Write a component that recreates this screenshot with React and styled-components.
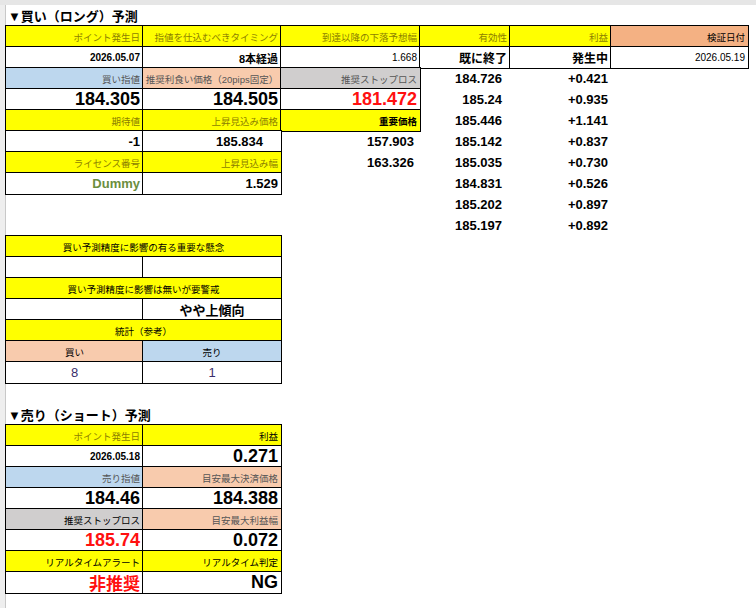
import React from 'react';
import styled, { createGlobalStyle } from 'styled-components';

const Global = createGlobalStyle`
  body { margin: 0; background: #fff; font-family: "Liberation Sans", "Noto Sans CJK JP", sans-serif; }
`;

const Page = styled.div`
  width: 756px;
  height: 608px;
  overflow: hidden;
  border-top: 5px solid #e6e6e6;
  box-sizing: border-box;
  display: flex;
`;

const Gutter = styled.div`
  width: 5px;
  background: #eeeeee;
  border-right: 1px solid #c8c8c8;
`;

const Sheet = styled.div`
  flex: 1;
  display: flex;
  flex-direction: column;
`;

const Title = styled.div`
  height: 21px;
  display: flex;
  align-items: center;
  font-weight: bold;
  font-size: 13px;
  padding-left: 2px;
  margin-top: ${(p) => p.$top || 0}px;
`;

const Grid = styled.div`
  display: grid;
  grid-template-columns: ${(p) => p.$cols};
  grid-auto-rows: 21px;
`;

const bgs = { y: '#ffff00', b: '#bdd7ee', p: '#f8cbad', g: '#d0cece', o: '#f4b183', w: '#fff' };

const Cell = styled.div`
  display: flex;
  align-items: center;
  justify-content: ${(p) => (p.$align === 'c' ? 'center' : 'flex-end')};
  padding: 0 ${(p) => p.$pad ?? 3}px;
  background: ${(p) => bgs[p.$bg] || 'transparent'};
  outline: ${(p) => (p.$line ? '1px solid #000' : 'none')};
  outline-offset: -0.5px;
  grid-column: span ${(p) => p.$span || 1};
  font-size: ${(p) => p.$size || 9.5}px;
  font-weight: ${(p) => (p.$bold ? 'bold' : 'normal')};
  color: ${(p) => p.$color || '#000'};
  white-space: nowrap;
  overflow: hidden;
`;

const H = '#8c7f00';

const hd = (t, bg = 'y', extra = {}) => ({ t, $bg: bg, $line: true, $color: bg === 'y' ? H : '#555', ...extra });
const big = (t, extra = {}) => ({ t, $bg: 'w', $line: true, $size: 18, $bold: true, ...extra });
const mid = (t, extra = {}) => ({ t, $size: 13, $bold: true, ...extra });
const sm = (t, extra = {}) => ({ t, $bg: 'w', $line: true, $bold: true, $size: 10, ...extra });
const empty = { t: '' };

const top = [
  [hd('ポイント発生日'), hd('指値を仕込むべきタイミング'), hd('到達以降の下落予想幅'), hd('有効性'), hd('利益'), hd('検証日付', 'o', { $color: '#000' })],
  [sm('2026.05.07'), sm('8本経過', { $size: 11 }), sm('1.668', { $bold: false }), sm('既に終了', { $size: 12 }), sm('発生中', { $size: 12 }), sm('2026.05.19', { $bold: false })],
  [hd('買い指値', 'b'), hd('推奨利食い価格（20pips固定）', 'p', { $align: 'c' }), hd('推奨ストップロス', 'g'), mid('184.726', { $pad: 8 }), mid('+0.421'), empty],
  [big('184.305'), big('184.505'), big('181.472', { $color: '#ff1010' }), mid('185.24', { $pad: 8 }), mid('+0.935'), empty],
  [hd('期待値'), hd('上昇見込み価格'), hd('重要価格', 'y', { $color: '#000', $bold: true }), mid('185.446', { $pad: 8 }), mid('+1.141'), empty],
  [mid('-1', { $bg: 'w', $line: true }), mid('185.834', { $bg: 'w', $line: true, $pad: 18 }), mid('157.903', { $pad: 6 }), mid('185.142', { $pad: 8 }), mid('+0.837'), empty],
  [hd('ライセンス番号'), hd('上昇見込み幅'), mid('163.326', { $pad: 6 }), mid('185.035', { $pad: 8 }), mid('+0.730'), empty],
  [mid('Dummy', { $bg: 'w', $line: true, $color: '#6b8e3e' }), mid('1.529', { $bg: 'w', $line: true }), empty, mid('184.831', { $pad: 8 }), mid('+0.526'), empty],
  [empty, empty, empty, mid('185.202', { $pad: 8 }), mid('+0.897'), empty],
  [empty, empty, empty, mid('185.197', { $pad: 8 }), mid('+0.892'), empty],
];

const ctr = (t, bg, extra = {}) => ({ t, $bg: bg, $line: true, $align: 'c', ...extra });
const middle = [
  [ctr('買い予測精度に影響の有る重要な懸念', 'y', { $span: 2 })],
  [ctr('', 'w'), ctr('', 'w')],
  [ctr('買い予測精度に影響は無いが要警戒', 'y', { $span: 2 })],
  [ctr('', 'w'), ctr('やや上傾向', 'w', { $size: 13, $bold: true })],
  [ctr('統計（参考）', 'y', { $span: 2 })],
  [ctr('買い', 'p'), ctr('売り', 'b')],
  [ctr('8', 'w', { $size: 13, $color: '#3a2d6b' }), ctr('1', 'w', { $size: 13, $color: '#3a2d6b' })],
];

const sell = [
  [hd('ポイント発生日'), hd('利益', 'y', { $color: '#000' })],
  [sm('2026.05.18'), big('0.271')],
  [hd('売り指値', 'b'), hd('目安最大決済価格', 'p')],
  [big('184.46'), big('184.388')],
  [hd('推奨ストップロス', 'g', { $color: '#000' }), hd('目安最大利益幅', 'p')],
  [big('185.74', { $color: '#ff1010' }), big('0.072')],
  [hd('リアルタイムアラート', 'y', { $color: '#000' }), hd('リアルタイム判定', 'y', { $color: '#000' })],
  [big('非推奨', { $color: '#ff1010', $size: 17 }), big('NG')],
];

const Rows = ({ rows }) =>
  rows.flatMap((r, i) => r.map(({ t, ...p }, j) => <Cell key={`${i}-${j}`} {...p}>{t}</Cell>));

export default function App() {
  return (
    <>
      <Global />
      <Page>
        <Gutter />
        <Sheet>
          <Title>▼買い（ロング）予測</Title>
          <Grid $cols="137px 138px 139px 90px 101px 137px">
            <Rows rows={top} />
          </Grid>
          <Grid $cols="137px 138px">
            <Rows rows={middle} />
          </Grid>
          <Title $top={21}>▼売り（ショート）予測</Title>
          <Grid $cols="137px 138px">
            <Rows rows={sell} />
          </Grid>
        </Sheet>
      </Page>
    </>
  );
}
